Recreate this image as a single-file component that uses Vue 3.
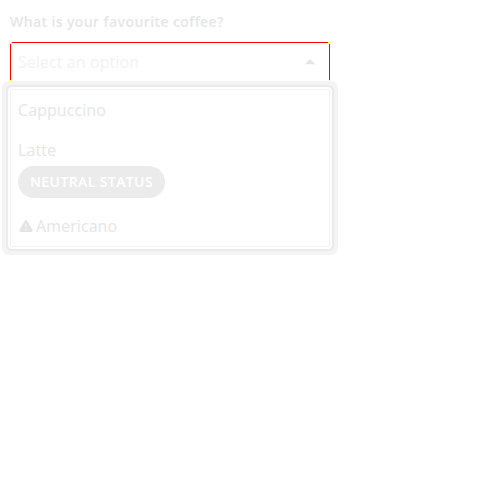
<script setup>
const label = 'What is your favourite coffee?'
</script>

<template>
  <main class="field">
    <div class="label">{{ label }}</div>
    <div class="select">
      <span class="placeholder">Select an option</span>
      <svg class="caret" width="10" height="6" viewBox="0 0 10 6"><path d="M0 5.2 4.3.4Q5 0 5.7.4L10 5.2Z" fill="#e4e4e4" /></svg>
      <i class="corner tl"></i><i class="corner tr"></i><i class="corner bl"></i><i class="corner br"></i>
    </div>
    <div class="list">
      <div class="option">Cappuccino</div>
      <div class="option latte">
        <span>Latte</span>
        <span class="status">NEUTRAL STATUS</span>
      </div>
      <div class="option last">
        <svg class="warn" width="14" height="12" viewBox="0 0 14 12">
          <path d="M5.8.7Q7-.6 8.2.7L13.5 10Q14 12 12.4 12H1.6Q0 12 .5 10Z" fill="#e4e4e4" />
          <path d="M7 4V7.2M7 8.6V10.2" stroke="#f6f6f6" stroke-width="1.5" />
        </svg>
        <span>Americano</span>
      </div>
    </div>
  </main>
</template>

<style scoped>
.field {
  box-sizing: border-box;
  width: 340px;
  padding: 10px;
  font: 16px/24px "Open Sans", sans-serif;
  letter-spacing: 0.08px;
  color: #e6e6e6;
}
.label {
  height: 32px;
  font-size: 14px;
  font-weight: 600;
  letter-spacing: 0.4px;
}
.select {
  position: relative;
  box-sizing: border-box;
  height: 40px;
  display: flex;
  align-items: center;
  justify-content: space-between;
  padding: 0 14px 0 7px;
  border: 1px solid #f00;
  border-radius: 2px;
  color: #f2f2f2;
}
.corner {
  position: absolute;
  width: 2px;
  height: 2px;
  background: linear-gradient(#ff0, #ff0) 1px 0 / 1px 1px no-repeat,
    linear-gradient(#ff0, #ff0) 0 1px / 1px 1px no-repeat, #fff;
}
.tl { top: -1px; left: -1px; }
.tr { top: -1px; right: -1px; transform: scaleX(-1); }
.bl { bottom: -1px; left: -1px; transform: scaleY(-1); }
.br { bottom: -1px; right: -1px; transform: scale(-1); }
.list {
  position: relative;
  box-sizing: border-box;
  height: 158px;
  margin-top: 7px;
  padding: 0 7px;
  border: 1px solid #f3f3f3;
  border-radius: 2px;
  background: #fff;
  box-shadow: 0 0 0 2px #fff, 0 0 0 4px #ebebeb, 0 0 0 8px #f4f4f4;
}
.option {
  padding-top: 8px;
  height: 32px;
}
.latte {
  display: flex;
  flex-direction: column;
  align-items: flex-start;
  gap: 4px;
  height: 68px;
}
.status {
  height: 32px;
  line-height: 32px;
  padding: 0 12px;
  border-radius: 16px;
  background: #ebebeb;
  color: #fff;
  font-size: 14px;
  font-weight: 600;
  letter-spacing: 0.4px;
}
.last {
  display: flex;
  align-items: center;
  height: 24px;
  gap: 3px;
  padding-left: 1px;
}
</style>
